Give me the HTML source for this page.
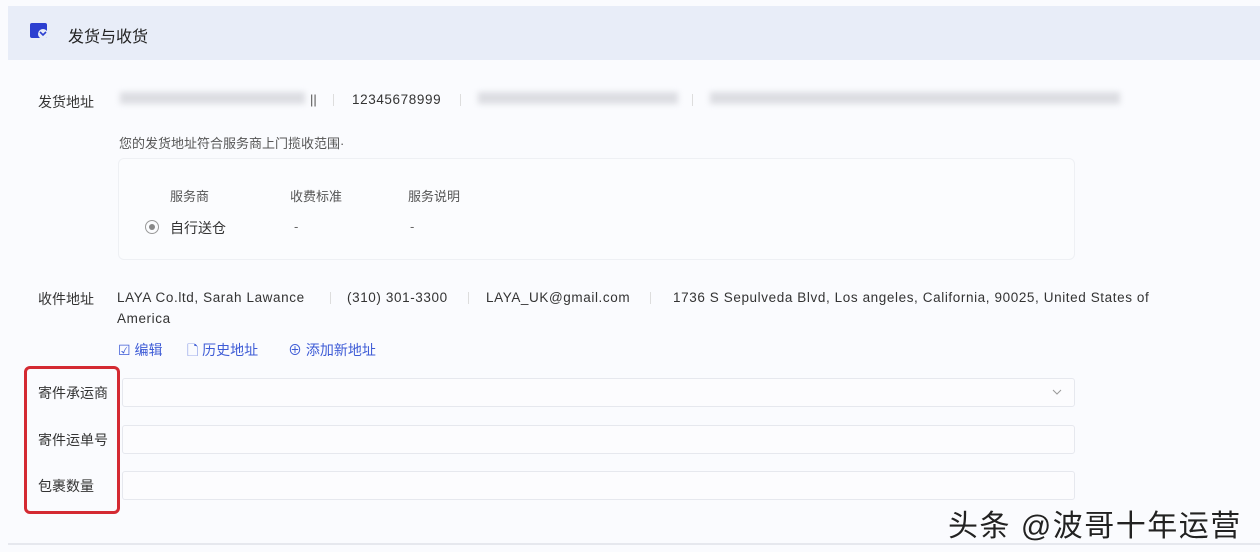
<!DOCTYPE html>
<html><head><meta charset="utf-8"><style>
*{margin:0;padding:0;box-sizing:border-box}
body{width:1260px;height:552px;background:#fafbfe;font-family:"Liberation Sans","Noto Sans CJK SC",sans-serif;color:#333;position:relative;overflow:hidden;font-size:13px}
.a{position:absolute;white-space:nowrap}
.hdr{position:absolute;left:8px;top:6px;width:1252px;height:54px;background:#e8edf8}
.blur{position:absolute;background:#dcdde2;filter:blur(3px);height:12px}
.sep{position:absolute;width:1px;height:12px;background:#ddd}
.inp{position:absolute;left:122px;width:953px;height:29px;border:1px solid #e6e8ee;border-radius:3px;background:#fcfcfe}
.blue{color:#3d5bd6}
.en{font-size:13.5px;letter-spacing:0.6px}
.lb{font-size:14px}
</style></head><body>
<div class="hdr"></div>
<svg class="a" style="left:30px;top:23px" width="20" height="18" viewBox="0 0 20 18"><rect x="0" y="0" width="17" height="15" rx="2" fill="#2c3fd0"/><circle cx="13" cy="11" r="5" fill="#e8edf8"/><path d="M10 9 l3 3 l3 -3" stroke="#2c3fd0" stroke-width="1.6" fill="none"/></svg>
<div class="a" style="left:68px;top:23px;font-size:16px;color:#222">发货与收货</div>

<div class="a lb" style="left:38px;top:92px">发货地址</div>
<div class="blur" style="left:120px;top:92px;width:185px"></div>
<div class="a" style="left:310px;top:92px;color:#555">||</div>
<div class="sep" style="left:333px;top:94px"></div>
<div class="a en" style="left:352px;top:92px">12345678999</div>
<div class="sep" style="left:460px;top:94px"></div>
<div class="blur" style="left:478px;top:92px;width:200px"></div>
<div class="sep" style="left:692px;top:94px"></div>
<div class="blur" style="left:710px;top:92px;width:410px"></div>

<div class="a" style="left:119px;top:133px;font-size:13px;color:#555">您的发货地址符合服务商上门揽收范围·</div>
<div class="a" style="left:118px;top:158px;width:957px;height:102px;border:1px solid #eef0f4;border-radius:6px;background:#fbfcfe"></div>
<div class="a" style="left:170px;top:186px;font-size:13px;color:#555">服务商</div>
<div class="a" style="left:290px;top:186px;font-size:13px;color:#555">收费标准</div>
<div class="a" style="left:408px;top:186px;font-size:13px;color:#555">服务说明</div>
<div class="a" style="left:145px;top:220px;width:14px;height:14px;border:1px solid #999;border-radius:50%"></div>
<div class="a" style="left:149px;top:224px;width:6px;height:6px;background:#888;border-radius:50%"></div>
<div class="a lb" style="left:170px;top:218px">自行送仓</div>
<div class="a" style="left:294px;top:219px;color:#666">-</div>
<div class="a" style="left:410px;top:219px;color:#666">-</div>

<div class="a lb" style="left:38px;top:289px">收件地址</div>
<div class="a en" style="left:117px;top:290px">LAYA Co.ltd, Sarah Lawance</div>
<div class="sep" style="left:330px;top:292px"></div>
<div class="a en" style="left:347px;top:290px">(310) 301-3300</div>
<div class="sep" style="left:468px;top:292px"></div>
<div class="a en" style="left:486px;top:290px">LAYA_UK@gmail.com</div>
<div class="sep" style="left:650px;top:292px"></div>
<div class="a en" style="left:673px;top:290px">1736 S Sepulveda Blvd, Los angeles, California, 90025, United States of</div>
<div class="a en" style="left:117px;top:311px">America</div>

<div class="a blue lb" style="left:118px;top:340px">☑ 编辑</div>
<div class="a blue lb" style="left:187px;top:340px">🗋 历史地址</div>
<div class="a blue lb" style="left:288px;top:340px">⊕ 添加新地址</div>

<div class="inp" style="top:378px"></div>
<svg class="a" style="left:1052px;top:388px" width="10" height="8"><path d="M1 2 l4 4 l4 -4" stroke="#999" fill="none"/></svg>
<div class="inp" style="top:425px"></div>
<div class="inp" style="top:471px"></div>

<div class="a" style="left:24px;top:366px;width:96px;height:148px;border:3px solid #d42a32;border-radius:6px"></div>
<div class="a lb" style="left:38px;top:383px">寄件承运商</div>
<div class="a lb" style="left:38px;top:430px">寄件运单号</div>
<div class="a lb" style="left:38px;top:476px">包裹数量</div>

<div class="a" style="left:8px;top:543px;width:1252px;height:2px;background:#e6e8ee"></div>
<div class="a" style="left:948px;top:501px;font-size:30px;letter-spacing:1.5px;color:#222;text-shadow:0 0 2px #fff,0 0 2px #fff">头条 @波哥十年运营</div>
</body></html>
